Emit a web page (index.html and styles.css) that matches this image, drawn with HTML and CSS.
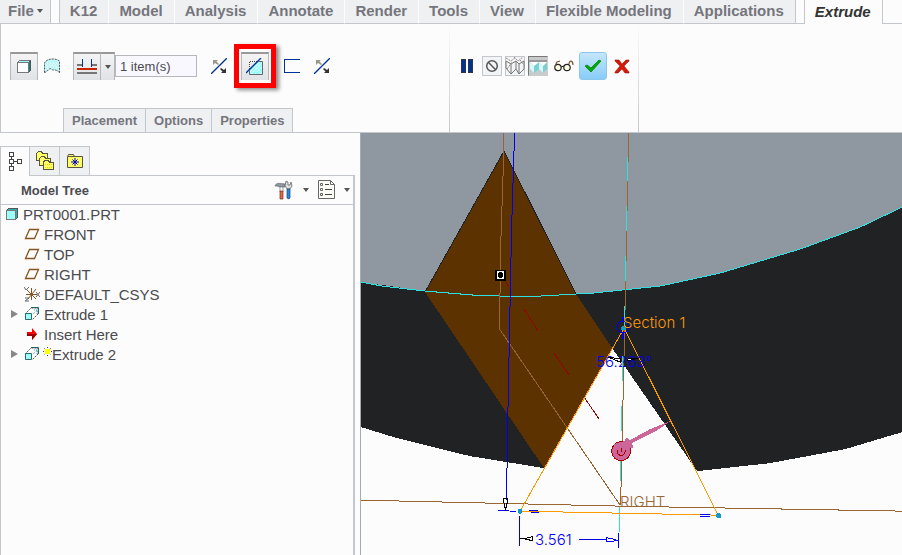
FILE: index.html
```
<!DOCTYPE html>
<html lang="en">
  <head>
    <meta charset="UTF-8" />
    <meta name="viewport" content="width=device-width, initial-scale=1.0" />
    <title>PRT0001 - Extrude</title>
    <link rel="stylesheet" href="styles.css">
  </head>

  <body>
    <nav class="tabs">
      <button class="tab file-tab">File <span class="caret"></span></button>
      <button class="tab first-tab">K12</button>
      <button class="tab">Model</button>
      <button class="tab">Analysis</button>
      <button class="tab">Annotate</button>
      <button class="tab">Render</button>
      <button class="tab">Tools</button>
      <button class="tab">View</button>
      <button class="tab">Flexible Modeling</button>
      <button class="tab last-tab">Applications</button>
      <button class="tab active-tab">Extrude</button>
    </nav>

    <section class="ribbon">
      <div class="group options-group">
        <div class="tools">
          <button class="tool pressed" aria-label="Solid">
            <svg width="16" height="16" viewBox="0 0 16 16" shape-rendering="crispEdges">
              <path d="M1.500 3.500l2-2h11l-2 2z" fill="#9ff" stroke="#777" />
              <path d="M12.500 3.500l2-2v10l-2 2z" fill="#088" stroke="#555" />
              <path d="M1.500 3.500h11v10h-11z" fill="#fff" stroke="#777" />
            </svg>
          </button>
          <button class="tool plain surface" aria-label="Surface">
            <svg width="18" height="16" viewBox="0 0 18 16">
              <path d="M1.500 14.500V5C4 0 13 0 16.500 3v12c-2-3-4-3-6-3s-2-2-4-1-2 3-5 3.500z" fill="#bff6f8" stroke="#555" stroke-dasharray="2 1" />
              <path d="M4 5h11M3 7h12M4 9h11" stroke="#fff" stroke-dasharray="1 2" />
            </svg>
          </button>
          <div class="split">
            <button class="tool pressed" aria-label="Depth">
              <svg width="20" height="16" viewBox="0 0 20 16" shape-rendering="crispEdges">
                <path d="M0 5h5v2H0zM15 5h5v2h-5zM0 13h20v2H0z" fill="#777" />
                <path d="M5 0h1v8H5zM14 0h1v8h-1z" fill="#039" />
                <path d="M0 9h20v2H0z" fill="#c20" />
              </svg>
            </button>
            <button class="tool pressed drop" aria-label="Depth options"><span class="caret"></span></button>
            <input class="items" type="text" value="1 item(s)" aria-label="Depth reference">
          </div>
          <button class="tool plain flip" aria-label="Flip depth direction">
            <svg width="16" height="16" viewBox="0 0 16 16">
              <path d="M0 16L16 0" stroke="#039" stroke-width="1.300" />
              <path d="M2 2h5L5.500 3.500 8 6 7 7 4 5 2 7z" fill="#998" />
              <path d="M15 15h-5l1.500-1.500L9 11l1-1 3 2 2-2z" fill="#333" />
            </svg>
          </button>
          <div class="highlight">
            <button class="tool pressed" aria-label="Remove material">
              <svg width="18" height="18" viewBox="0 0 18 18">
                <path d="M3 12L12 3h5v14H3z" fill="#9ff" />
                <path d="M4 14l10-10M4 17L17 4M8 17l9-9M13 17l4-4" stroke="#fff" stroke-dasharray="3 1" />
                <path d="M12.500 3.500h4v13h-13v-4" fill="none" stroke="#666" />
                <path d="M3.500 11V3.500H11" fill="none" stroke="#444" stroke-dasharray="1 1" />
                <path d="M0 15L15 0" stroke="#039" stroke-width="1.300" />
              </svg>
            </button>
          </div>
          <button class="tool plain thicken" aria-label="Thicken sketch">
            <svg width="16" height="16" viewBox="0 0 16 16" shape-rendering="crispEdges">
              <path d="M15.500 1.500H.5v13h15" fill="none" stroke="#039" />
            </svg>
          </button>
          <button class="tool plain flip" aria-label="Flip material direction">
            <svg width="16" height="16" viewBox="0 0 16 16">
              <path d="M0 16L16 0" stroke="#039" stroke-width="1.300" />
              <path d="M2 2h5L5.500 3.500 8 6 7 7 4 5 2 7z" fill="#998" />
              <path d="M15 15h-5l1.500-1.500L9 11l1-1 3 2 2-2z" fill="#333" />
            </svg>
          </button>
        </div>
        <div class="panels">
          <button class="panel-tab">Placement</button>
          <button class="panel-tab">Options</button>
          <button class="panel-tab">Properties</button>
        </div>
      </div>

      <div class="group confirm-group">
        <div class="tools">
          <button class="tool plain" aria-label="Pause">
            <svg width="12" height="14" viewBox="0 0 12 14" shape-rendering="crispEdges">
              <path d="M.5.5h4v13h-4zM7.500.5h4v13h-4z" fill="#039" stroke="#334" />
            </svg>
          </button>
          <button class="tool small no-preview" aria-label="No preview">
            <svg width="14" height="14" viewBox="0 0 14 14" fill="none" stroke="#555" stroke-width="1.500">
              <circle cx="7" cy="7" r="5.300" /><path d="M3.300 3.300l7.400 7.400" />
            </svg>
          </button>
          <button class="tool small" aria-label="Unattached preview">
            <svg width="20" height="18" viewBox="0 0 20 18" fill="none" stroke="#777">
              <path d="M1 4l5 3 5-3 3 3 5-3M1 4v7l5 6 5-5 3 5 5-5V4M6 7v10M11 4v8M14 7v10" />
              <path d="M1 1l5 3 5-4M9 0l4 4 5-4M2 12l5-7M15 3l4 5" stroke="#988" stroke-dasharray="2 1" />
            </svg>
          </button>
          <button class="tool small on" aria-label="Attached preview">
            <svg width="18" height="17" viewBox="0 0 18 17">
              <path d="M0 2h18v2H0z" fill="#999" />
              <path d="M1 4l4 4 5-4 4 4 4-4v7l-4 4-4-4-5 4-4-4z" fill="#7cd0d2" />
              <path d="M1 4l4 4v7l-4-4zM10 4l4 4v7l-4-4z" fill="#d4fafa" />
              <path d="M1 4h9L5 8zM10 4h8l-4 4z" fill="#fff" />
            </svg>
          </button>
          <button class="tool plain glasses" aria-label="Verified preview">
            <svg width="20" height="12" viewBox="0 0 20 12" fill="#ffffe0" stroke="#222" stroke-width="1.200">
              <circle cx="4" cy="7.500" r="3.200" /><circle cx="13" cy="7.500" r="3.200" />
              <path d="M7 7l3-1" /><path d="M1 6l2-4 3-1M15 4c0-4 4-4 4 1" fill="none" stroke="#753" />
            </svg>
          </button>
          <button class="tool accept" aria-label="OK">
            <svg width="18" height="14" viewBox="0 0 18 14">
              <path d="M1 7l2-1 4 3 8-8 2 1L7 13z" fill="#0a0" stroke="#070" stroke-width=".7" />
            </svg>
          </button>
          <button class="tool plain cancel" aria-label="Cancel">
            <svg width="16" height="15" viewBox="0 0 16 15">
              <path d="M1 1h4l3 4 4-4h3v1l-5 5 5 6v1h-4l-3-4-4 4H1v-1l5-6-5-5z" fill="#d31c08" stroke="#a11" stroke-width=".6" />
            </svg>
          </button>
        </div>
      </div>
    </section>

    <div class="workspace">
      <aside class="sidebar">
        <div class="side-tabs">
          <button class="side-tab selected" aria-label="Model tree">
            <svg width="14" height="20" viewBox="0 0 14 20" fill="none" stroke="#444" shape-rendering="crispEdges">
              <path d="M1.500.5h4v4h-4zM1.500 7.500h4v4h-4zM1.500 14.500h4v4h-4zM9.500 7.500h4v4h-4zM3.500 4v3M3.500 11v3M6 9.500h3" />
            </svg>
          </button>
          <button class="side-tab" aria-label="Folder browser">
            <svg width="20" height="20" viewBox="0 0 20 20" fill="#ff6" stroke="#554" shape-rendering="crispEdges">
              <path d="M1.500 9.500v-7l2-2h3l1 2h5v7z" />
              <path d="M4.500 14.500v-7l2-2h3l1 2h5v7z" />
              <path d="M8.500 18.500v-7l1-2h4l1 2h4v7z" />
              <path d="M10 13.500h7M10 16.500h7" stroke="#fc0" stroke-dasharray="1 1" />
            </svg>
          </button>
          <button class="side-tab" aria-label="Favorites">
            <svg width="18" height="16" viewBox="0 0 18 16">
              <path d="M1.500 14.500v-11l1-2h5l1 2h8v11z" fill="#ff6" stroke="#554" />
              <path d="M2 3.500h14" stroke="#554" />
              <path d="M9 5v8M5 9h8M6.500 6.500l5 5M11.500 6.500l-5 5" stroke="#00c" />
            </svg>
          </button>
        </div>

        <div class="tree-panel">
          <header class="tree-header">
            <h1 class="tree-title">Model Tree</h1>
            <button class="header-tool" aria-label="Settings">
              <svg width="20" height="20" viewBox="0 0 20 20">
                <path d="M1 6c1-3 3-3 10-2v3H6L3 6z" fill="#8a9a9e" stroke="#667" stroke-width=".7" />
                <path d="M6 7h3v5H6z" fill="#fff" stroke="#777" stroke-width=".7" /><path d="M6 11h3v8H6z" fill="#d64" stroke="#732" stroke-width=".7" />
                <path d="M12 1l2 1v3h2l1-3 1 4-2 3h-3l-2-3z" fill="#ddd" stroke="#555" stroke-width=".7" />
                <path d="M13 9h3v9l-1 1-2-1z" fill="#28d" stroke="#247" stroke-width=".7" />
              </svg>
              <span class="caret"></span>
            </button>
            <button class="header-tool" aria-label="Show">
              <svg width="17" height="20" viewBox="0 0 17 20">
                <path d="M.5.5h12l4 4v14H.5z" fill="#fdfdf8" stroke="#666" /><path d="M12.500.5v4h4" fill="none" stroke="#666" />
                <path d="M7 4.500h4M7 9.500h7M7 14.500h7" stroke="#444" />
                <path d="M2.500 3.500h2v2h-2zM2.500 8.500h2v2h-2zM2.500 13.500h2v2h-2z" fill="none" stroke="#666" />
              </svg>
              <span class="caret"></span>
            </button>
          </header>

          <ul class="tree">
            <li class="node root">
              <svg width="14" height="14" viewBox="0 0 14 14" shape-rendering="crispEdges">
                <path d="M1.500 3.500l2-2h9v9l-2 2z" fill="#3aa" stroke="#555" /><path d="M1.500 3.500h9v9h-9z" fill="#9ff" stroke="#777" />
              </svg>PRT0001.PRT
            </li>
            <li class="node child"><svg width="16" height="14" viewBox="0 0 16 14"><path d="M1.500 11.500l4-9h9l-4 9z" fill="none" stroke="#852" stroke-width="1.300" /></svg>FRONT</li>
            <li class="node child"><svg width="16" height="14" viewBox="0 0 16 14"><path d="M1.500 11.500l4-9h9l-4 9z" fill="none" stroke="#852" stroke-width="1.300" /></svg>TOP</li>
            <li class="node child"><svg width="16" height="14" viewBox="0 0 16 14"><path d="M1.500 11.500l4-9h9l-4 9z" fill="none" stroke="#852" stroke-width="1.300" /></svg>RIGHT</li>
            <li class="node child">
              <svg width="16" height="16" viewBox="0 0 16 16" fill="none">
                <path d="M2 8.500h11M7.500 2v12M3 4l9 9M12 3l-8 10" stroke="#852" />
                <path d="M0 1l2 3 3-3M1 12h4l-4 3h4M12 6l4 5M16 6l-4 5" stroke="#666" />
              </svg>DEFAULT_CSYS
            </li>
            <li class="node expandable">
              <span class="arrow"></span>
              <svg width="16" height="16" viewBox="0 0 16 16">
                <path d="M1 8l6-6h7v6l-6 6" fill="none" stroke="#555" stroke-dasharray="2 1" />
                <path d="M7 1.500h7.500V8" fill="none" stroke="#266" /><path d="M10 4h3v4M9 8l4-4" fill="none" stroke="#3aa" stroke-dasharray="1 1" />
                <path d="M1.500 7.500h6v6h-6z" fill="#9ff" stroke="#366" />
              </svg>Extrude 1
            </li>
            <li class="node child">
              <svg width="16" height="14" viewBox="0 0 16 14"><path d="M3 5h5V1l5 6-5 6V9H3z" fill="#f00" /><path d="M3 7h10l-5 6V9H3z" fill="#900" /></svg>Insert Here
            </li>
            <li class="node expandable">
              <span class="arrow"></span>
              <svg width="16" height="16" viewBox="0 0 16 16">
                <path d="M1 8l6-6h7v6l-6 6" fill="none" stroke="#555" stroke-dasharray="2 1" />
                <path d="M7 1.500h7.500V8" fill="none" stroke="#266" /><path d="M10 4h3v4M9 8l4-4" fill="none" stroke="#3aa" stroke-dasharray="1 1" />
                <path d="M1.500 7.500h6v6h-6z" fill="#9ff" stroke="#366" />
              </svg>
              <svg class="new-mark" width="9" height="14" viewBox="0 0 9 14"><path d="M4.500 0v9M0 4.500h9M1 1l7 7M8 1L1 8" stroke="#443" stroke-dasharray="1 1" /><path d="M2 2h5v5H2z" fill="#ff0" /></svg>Extrude 2
            </li>
          </ul>
        </div>
      </aside>

      <main class="graphics">
        <svg class="scene" viewBox="361 133 541 422" preserveAspectRatio="xMinYMin slice" fill="none" shape-rendering="crispEdges">
          <!-- solid faces -->
          <path d="M361 133H902V207L860 227 800 249 720 273 660 286 593 293 540 296H500L473 295 425 291 361 282z" fill="#8f97a0" />
          <path d="M361 282L425 291 473 295 500 296H540L593 293 660 286 720 273 800 249 860 227 902 207V432L845 449 770 463 697 471 612 348 544 468 507 462 470 456 397 438 361 427z" fill="#212224" />
          <path d="M504 151L576 294 612 348 544 468 425 292z" fill="#5c3300" />
          <path d="M425 292L504 151 576 294" stroke="#212224" />
          <path d="M361 282L382 286 425 291 473 295 500 296H540L593 293 660 286 720 273 800 249 860 227 902 207" stroke="#2de0e0" />

          <!-- datum planes -->
          <path d="M503.500 133V160L500.500 250 499.500 329 620 505" stroke="#963" />
          <path d="M628.500 133L624.500 330 620.500 505M361 500L620 506 902 511" stroke="#963" />
          <path d="M627.500 157v24M626.500 206v25M625.500 256v25M624.500 306v24M622.500 356v25M621.500 406v25M620.500 456v25M619.500 507v25" stroke="#2de0e0" />
          <path d="M504 279l5 8M524 309l14 22M554 353l15 22M584 397l15 22" stroke="#900" />

          <!-- sketch -->
          <path d="M624 328L520 511 718 515z" stroke="#f90" />
          <circle cx="623" cy="327" r="6" stroke="#00e" />
          <path d="M623 317v5M623 333v6" stroke="#00e" stroke-width="2" />
          <circle cx="623.500" cy="328" r="2.500" fill="#19c" />
          <circle cx="520" cy="511" r="2.500" fill="#19c" />
          <circle cx="718.500" cy="515.500" r="2.500" fill="#19c" />
          <path d="M529 510.500h9M531 512.500h8M700 514.500h10M700 516.500h10" stroke="#00e" />

          <!-- dimensions -->
          <path d="M514.500 133L511.500 230 509.500 330 507.500 430 506.500 500M498 510.500h11M510 511.500h6M519.500 516v30M618.500 533v15M579 539.500h28M606 537.500l6 1 6 2-12 1z" stroke="#00e" />
          <path d="M503.500 498.500h4l-1 9h-2zM505.500 508v3M520 538.500h4l8-2v4l-8-2" stroke="#000" />
          <text class="label dimension" x="596" y="367">56.263°</text>
          <path d="M608 357l12 2v3zM638 358l-11 1v2z" fill="#fff" stroke="#000" />
          <path d="M622.500 356v25" stroke="#2de0e0" />
          <text class="label section" x="623" y="328">Section 1</text>
          <text class="label plane" x="620" y="507">RIGHT</text>
          <text class="label dimension" x="535" y="545">3.561</text>

          <!-- depth handle and direction arrow -->
          <circle cx="621" cy="451" r="9.500" fill="#c69" stroke="#a00" />
          <path d="M670 421L656 431 632 443 633 448 618 449 614 444 624 441 627 437 630 440 650 429z" fill="#c69" />
          <path d="M617 450c-1 7 9 7 8 0M621 448v4" stroke="#a00" />
          <path d="M495 270h11v11h-11z" fill="#000" transform="translate(-.5 -.5)" />
          <path d="M497 271h7v8h-7z" fill="#fff" />
          <circle cx="500.500" cy="275" r="2.700" fill="#000" />
        </svg>
      </main>
    </div>
  </body>
</html>
```
FILE: styles.css
```
* {
  box-sizing: border-box;
}

body {
  display: flex;
  flex-direction: column;
  min-height: 100vh;
  margin: 0;
  font-family: "Liberation Sans", Arial, sans-serif;
  color: #4b4b50;
  background-color: #fcfcfc;
}

button {
  margin: 0;
  padding: 0;
  border: none;
  background: none;
  font-family: inherit;
  color: inherit;
}

svg {
  display: block;
  flex: none;
}

.caret {
  border: 3px solid transparent;
  border-top: 4px solid #555;
  border-bottom: none;
}

/* ribbon tabs */
.tabs {
  display: flex;
  height: 24px;
  box-shadow: inset 0 -1px #c3c7cb;
}

.tab {
  padding: 0 11px 2px 10px;
  border-right: 1px solid #fcfcfc;
  border-bottom: 1px solid #c3c7cb;
  background-color: #eef0f2;
  font-size: 15px;
  font-weight: bold;
  color: #75757c;
  white-space: nowrap;
}

.file-tab {
  display: flex;
  align-items: center;
  gap: 3px;
  padding: 0 7px 2px 8px;
  border-right: 1px solid #c3c7cb;
}

.first-tab {
  margin-left: 8px;
  border-left: 1px solid #c3c7cb;
}

.last-tab {
  border-right: 1px solid #c3c7cb;
}

.active-tab {
  margin-left: 8px;
  border: solid #c3c7cb;
  border-width: 0 1px;
  background-color: #fcfcfc;
  font-style: italic;
  color: #333;
}

/* dashboard */
.ribbon {
  display: flex;
  height: 109px;
  border-left: 1px solid #c3c7cb;
  border-bottom: 1px solid #c3c7cb;
}

.group {
  display: flex;
  flex-direction: column;
  justify-content: space-between;
  padding-top: 28px;
  border-right: 1px solid;
  border-image: linear-gradient(#fcfcfc, #c3c7cb) 1;
}

.options-group {
  padding-left: 9px;
  padding-right: 119px;
}

.confirm-group {
  padding-left: 11px;
  padding-right: 8px;
}

.tools {
  display: flex;
  align-items: center;
  height: 28px;
}

.tool {
  display: flex;
  align-items: center;
  justify-content: center;
}

.pressed {
  width: 28px;
  height: 28px;
  border: 1px solid #b5b7ba;
  border-top: 2px solid #999;
  border-bottom: none;
  background: linear-gradient(#f4f4f4, #e0e2e5);
}

.surface {
  margin: 0 12px 0 5px;
}

.split {
  display: flex;
  align-items: center;
}

.drop {
  width: 14px;
  border-left: none;
}

.items {
  width: 82px;
  height: 22px;
  padding: 0 4px;
  border: 1px solid #b5b7ba;
  background-color: #f9f7ff;
  font-family: inherit;
  font-size: 13px;
  color: #4b4b50;
}

.flip {
  margin-left: 14px;
}

.highlight {
  margin: 0 8px 0 7px;
  padding: 3px 2px;
  border: 5px solid #f00;
  box-shadow: 3px 2px 4px #888;
}

.small {
  width: 20px;
  height: 20px;
  margin-right: 3px;
  border: 1px solid #c3c7cb;
  background-color: #f3f4f5;
}

.no-preview {
  margin-left: 9px;
}

.on {
  border-color: #777 #ccc #ccc #777;
  background-color: #c8cacc;
}

.glasses {
  margin: 0 5px 0 3px;
}

.accept {
  width: 28px;
  height: 28px;
  border: 1px solid #8cc8ee;
  border-radius: 3px;
  background: linear-gradient(#c5e6fb, #87ccf8);
}

.cancel {
  margin-left: 7px;
}

.panels {
  display: flex;
  padding-left: 53px;
}

.panel-tab {
  height: 24px;
  padding: 0 8px;
  border: solid #c3c7cb;
  border-width: 1px 1px 0 1px;
  background-color: #eef0f2;
  font-size: 13px;
  font-weight: bold;
  color: #75757c;
}

.panel-tab + .panel-tab {
  border-left: none;
}

/* model tree */
.workspace {
  display: flex;
  flex: 1;
}

.sidebar {
  display: flex;
  flex-direction: column;
  width: 40%;
  padding-top: 13px;
  padding-right: 5px;
  border-right: 1px solid #a5abb2;
}

.side-tabs {
  display: flex;
  height: 30px;
  box-shadow: inset 0 -1px #c3c7cb;
}

.side-tab {
  display: flex;
  align-items: center;
  justify-content: center;
  width: 30px;
  border: 1px solid #c3c7cb;
  border-left: none;
  background-color: #eef0f2;
}

.selected {
  border-left: 1px solid #c3c7cb;
  border-bottom: none;
  background-color: #fcfcfc;
}

.tree-panel {
  flex: 1;
  border-left: 1px solid #c3c7cb;
  border-right: 2px solid #c3c7cb;
}

.tree-header {
  display: flex;
  align-items: center;
  gap: 9px;
  height: 29px;
  padding: 0 3px 0 20px;
  border-bottom: 1px solid #c3c7cb;
}

.tree-title {
  flex: 1;
  margin: 0;
  font-size: 13px;
}

.header-tool {
  display: flex;
  align-items: center;
  gap: 9px;
}

.tree {
  margin: 0;
  padding: 0;
  list-style: none;
}

.node {
  display: flex;
  align-items: center;
  gap: 4px;
  height: 20px;
  padding-bottom: 2px;
  font-size: 15px;
}

.root {
  padding-left: 4px;
}

.child {
  padding-left: 23px;
}

.expandable {
  padding-left: 10px;
}

.arrow {
  margin-right: 2px;
  border: 4px solid transparent;
  border-left: 7px solid #888;
  border-right: none;
}

.new-mark {
  margin: 0 -4px 0 -1px;
}

/* graphics area */
.graphics {
  position: relative;
  flex: 1;
  min-width: 0;
}

.scene {
  position: absolute;
  width: 100%;
  height: 100%;
}

.label {
  font-family: Inter, "Liberation Sans", sans-serif;
  font-size: 15px;
  font-weight: 300;
}

.section {
  fill: #f90;
}

.plane {
  fill: #963;
}

.dimension {
  fill: #00e;
}
```
